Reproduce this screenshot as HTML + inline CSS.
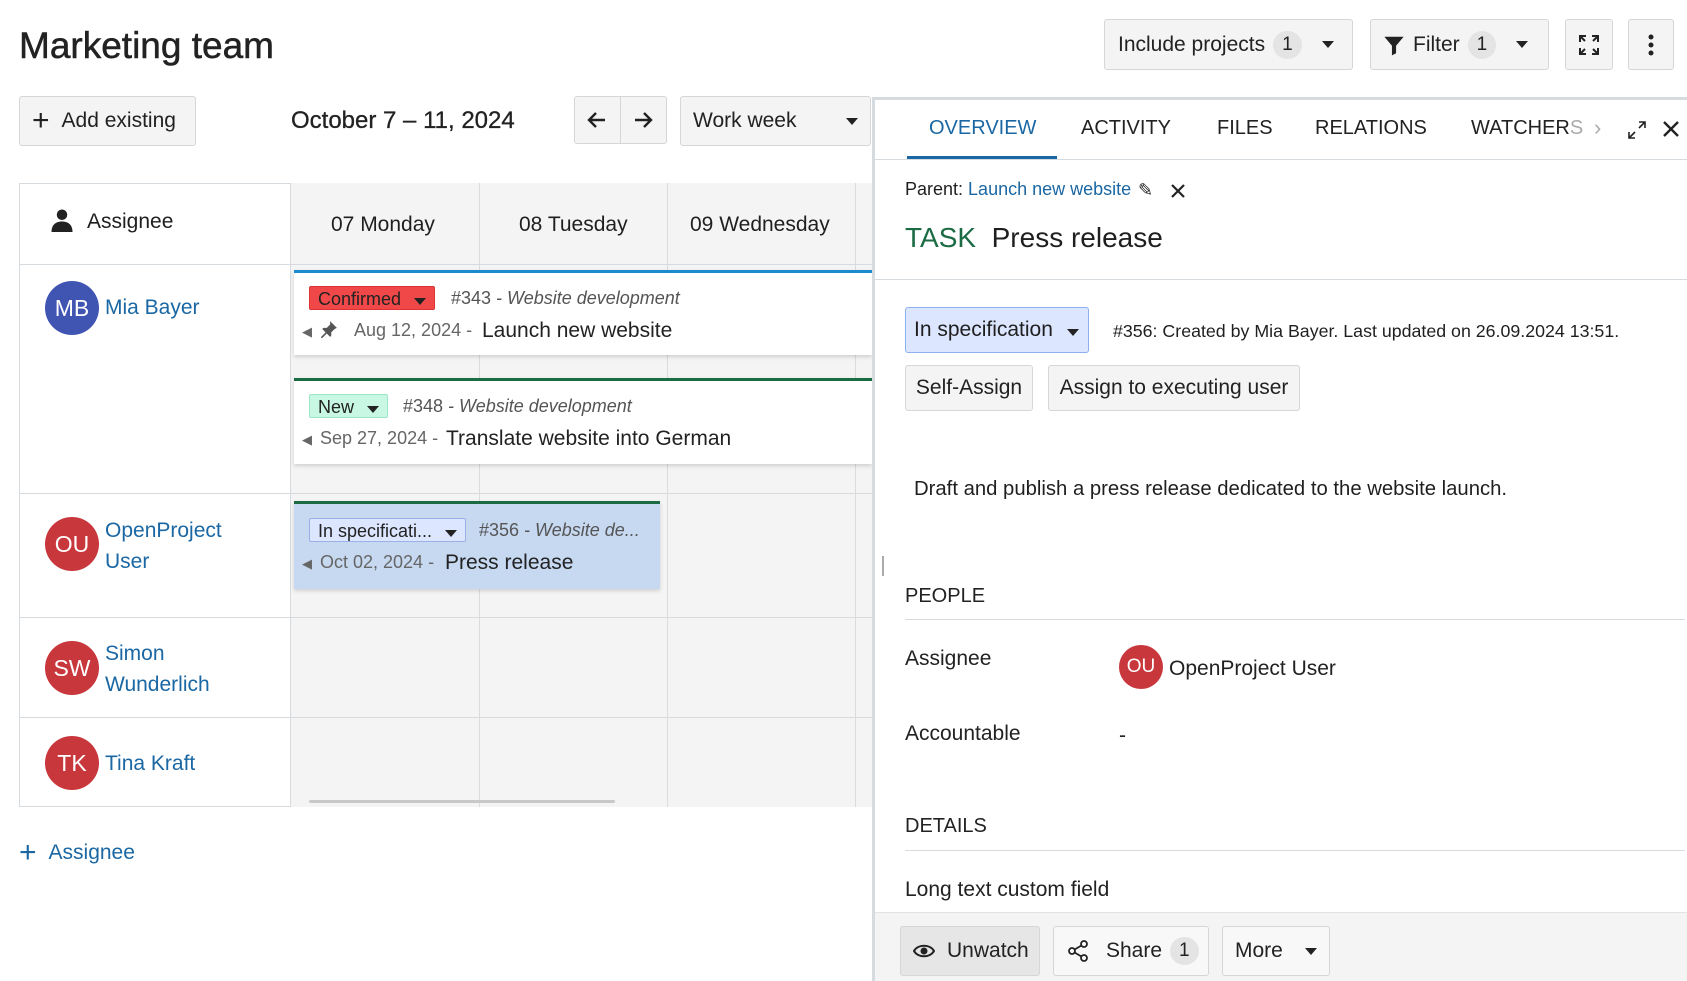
<!DOCTYPE html>
<html><head><meta charset="utf-8"><style>
*{box-sizing:border-box;margin:0;padding:0}
body{width:1687px;height:981px;overflow:hidden;background:#fff;font-family:"Liberation Sans",sans-serif;color:#1f1f1f;position:relative;font-size:20px}
.a{position:absolute;white-space:nowrap}
.btn{position:absolute;border:1px solid #d6d6d6;background:#f4f4f4;border-radius:3px;display:flex;align-items:center;font-size:21px;color:#222}
.cnt{display:inline-block;background:#e4e4e4;border-radius:14px;padding:0 9px;font-size:19px;margin-left:8px;line-height:28px}
.tri{display:inline-block;width:0;height:0;border-left:6px solid transparent;border-right:6px solid transparent;border-top:7px solid #222}
.av{position:absolute;width:54px;height:54px;border-radius:50%;color:#fff;font-size:23px;display:flex;align-items:center;justify-content:center}
.lk{color:#1a67a3}
.card{position:absolute;background:#fff;box-shadow:0 2px 4px rgba(0,0,0,.15)}
.tag{position:absolute;font-size:18px;padding:0 8px;height:24px;line-height:24px;border-radius:2px}
.meta{position:absolute;font-size:18px;color:#555;font-style:italic}
.sub{position:absolute;font-size:18px;color:#666}
.ttl{position:absolute;font-size:21px;color:#222}
.tab{position:absolute;top:117px;font-size:20px;color:#222}
.lbl{position:absolute;font-size:21px;color:#222}
.hd{position:absolute;font-size:20px;color:#222;font-weight:normal}
</style></head><body>
<div class="a" style="left:19px;top:25px;font-size:37px;color:#222;-webkit-text-stroke:0.5px #222">Marketing team</div>

<div class="btn" style="left:1104px;top:19px;width:249px;height:51px;padding-left:13px">Include projects<span class="cnt">1</span><span class="tri" style="margin-left:20px"></span></div>
<div class="btn" style="left:1370px;top:19px;width:179px;height:51px;padding-left:12px"><svg width="22" height="22" viewBox="0 0 16 16"><path d="M1 2h14l-5.5 6.5V14l-3 1.5V8.5z" fill="#222"/></svg><span style="margin-left:8px">Filter</span><span class="cnt">1</span><span class="tri" style="margin-left:20px"></span></div>
<div class="btn" style="left:1565px;top:19px;width:48px;height:51px;justify-content:center"><svg width="24" height="24" viewBox="0 0 24 24" fill="none" stroke="#222" stroke-width="2"><path d="M3 9V3h6M15 3h6v6M21 15v6h-6M9 21H3v-6M3 3l5 5M21 3l-5 5M21 21l-5-5M3 21l5-5"/></svg></div>
<div class="btn" style="left:1628px;top:19px;width:46px;height:51px;justify-content:center"><svg width="6" height="22"><circle cx="3" cy="3" r="2.5" fill="#222"/><circle cx="3" cy="11" r="2.5" fill="#222"/><circle cx="3" cy="19" r="2.5" fill="#222"/></svg></div>

<div class="btn" style="left:19px;top:96px;width:177px;height:50px;padding-left:12px"><span style="font-size:30px;font-weight:300;margin-right:12px;line-height:1">+</span>Add existing</div>
<div class="a" style="left:291px;top:107px;font-size:24px;color:#222;-webkit-text-stroke:0.3px #222">October 7 – 11, 2024</div>
<div class="btn" style="left:574px;top:96px;width:93px;height:48px"><span style="width:46px;text-align:center;border-right:1px solid #d6d6d6;height:100%;display:flex;align-items:center;justify-content:center"><svg width="20" height="18" viewBox="0 0 20 18" fill="none" stroke="#222" stroke-width="2.4"><path d="M18 9H3M9 2L2 9l7 7"/></svg></span><span style="width:46px;display:flex;justify-content:center"><svg width="20" height="18" viewBox="0 0 20 18" fill="none" stroke="#222" stroke-width="2.4"><path d="M2 9h15M11 2l7 7-7 7"/></svg></span></div>
<div class="btn" style="left:680px;top:96px;width:191px;height:50px;padding-left:12px">Work week<span class="tri" style="margin-left:50px"></span></div>

<!-- table -->
<div class="a" style="left:19px;top:183px;width:853px;height:624px;border-top:1px solid #d6dbe0;border-left:1px solid #d6dbe0;border-bottom:1px solid #d6dbe0;background:#fff"></div>
<div class="a" style="left:290px;top:183px;width:582px;height:624px;background:#f4f4f4"></div>
<div class="a" style="left:290px;top:183px;width:1px;height:624px;background:#d6dbe0"></div>
<div class="a" style="left:479px;top:183px;width:1px;height:624px;background:#dcdcdc"></div>
<div class="a" style="left:667px;top:183px;width:1px;height:624px;background:#dcdcdc"></div>
<div class="a" style="left:855px;top:183px;width:1px;height:624px;background:#dcdcdc"></div>
<div class="a" style="left:19px;top:264px;width:853px;height:1px;background:#d6dbe0"></div>
<div class="a" style="left:19px;top:493px;width:853px;height:1px;background:#d6dbe0"></div>
<div class="a" style="left:19px;top:617px;width:853px;height:1px;background:#d6dbe0"></div>
<div class="a" style="left:19px;top:717px;width:853px;height:1px;background:#d6dbe0"></div>
<div class="a" style="left:50px;top:208px"><svg width="24" height="24" viewBox="0 0 16 16"><circle cx="8" cy="4.5" r="3.5" fill="#222"/><path d="M1 16c0-5 3-7 7-7s7 2 7 7z" fill="#222"/></svg></div>
<div class="a" style="left:87px;top:210px;font-size:21px">Assignee</div>
<div class="a" style="left:331px;top:213px;font-size:21px">07 Monday</div>
<div class="a" style="left:519px;top:213px;font-size:21px">08 Tuesday</div>
<div class="a" style="left:690px;top:213px;font-size:21px">09 Wednesday</div>

<div class="av" style="left:45px;top:281px;background:#4054b2">MB</div>
<div class="a lk" style="left:105px;top:296px;font-size:21px">Mia Bayer</div>
<div class="av" style="left:45px;top:517px;background:#c8373c">OU</div>
<div class="a lk" style="left:105px;top:515px;font-size:21px;line-height:31px">OpenProject<br>User</div>
<div class="av" style="left:45px;top:641px;background:#c8373c">SW</div>
<div class="a lk" style="left:105px;top:638px;font-size:21px;line-height:31px">Simon<br>Wunderlich</div>
<div class="av" style="left:45px;top:736px;background:#c8373c">TK</div>
<div class="a lk" style="left:105px;top:752px;font-size:21px">Tina Kraft</div>

<div class="card" style="left:294px;top:270px;width:578px;height:85px;border-top:3px solid #1a8bcf"></div>
<div class="tag" style="left:309px;top:286px;background:#f04848;border:1px solid #d33;color:#222">Confirmed <span class="tri" style="margin-left:8px"></span></div>
<div class="meta" style="left:451px;top:288px"><span style="font-style:normal">#343</span> - Website development</div>
<div class="sub" style="left:302px;top:320px;font-size:13px;top:324px">◀</div>
<div class="a" style="left:320px;top:320px"><svg width="18" height="18" viewBox="0 0 16 16"><path d="M9 1l6 6-2 1-3 3 0 3-1 1-3-3-4 4-1 0 0-1 4-4-3-3 1-1 3 0 3-3z" fill="#555"/></svg></div>
<div class="sub" style="left:354px;top:320px">Aug 12, 2024 -</div>
<div class="ttl" style="left:482px;top:319px">Launch new website</div>

<div class="card" style="left:294px;top:378px;width:578px;height:86px;border-top:3px solid #1b6b44"></div>
<div class="tag" style="left:309px;top:394px;background:#c8f7e3;border:1px solid #9de6c5;color:#222">New <span class="tri" style="margin-left:8px"></span></div>
<div class="meta" style="left:403px;top:396px"><span style="font-style:normal">#348</span> - Website development</div>
<div class="sub" style="left:302px;top:432px;font-size:13px">◀</div>
<div class="sub" style="left:320px;top:428px">Sep 27, 2024 -</div>
<div class="ttl" style="left:446px;top:427px">Translate website into German</div>

<div class="card" style="left:294px;top:501px;width:366px;height:88px;border-top:3px solid #1b6b44;background:#c6d9f1"></div>
<div class="tag" style="left:309px;top:518px;background:#dde6ff;border:1px solid #9ab0e6;color:#222">In specificati... <span class="tri" style="margin-left:8px"></span></div>
<div class="meta" style="left:479px;top:520px"><span style="font-style:normal">#356</span> - Website de...</div>
<div class="sub" style="left:302px;top:556px;font-size:13px">◀</div>
<div class="sub" style="left:320px;top:552px">Oct 02, 2024 -</div>
<div class="ttl" style="left:445px;top:551px">Press release</div>

<div class="a" style="left:309px;top:800px;width:306px;height:3px;background:#c8c8c8;border-radius:2px"></div>
<div class="a lk" style="left:19px;top:836px;font-size:21px"><span style="font-size:30px;font-weight:300;vertical-align:-3px;margin-right:12px">+</span>Assignee</div>

<!-- right panel -->
<div class="a" style="left:872px;top:97px;width:815px;height:884px;border-left:3px solid #d6dbe0;border-top:3px solid #d6dbe0;background:#fff"></div>
<div class="a" style="left:882px;top:556px;width:2px;height:20px;border-left:1px solid #aaa;border-right:1px solid #aaa"></div>
<div class="tab" style="left:929px;color:#1a67a3">OVERVIEW</div>
<div class="a" style="left:907px;top:156px;width:150px;height:4px;background:#1a67a3"></div>
<div class="tab" style="left:1081px">ACTIVITY</div>
<div class="tab" style="left:1217px">FILES</div>
<div class="tab" style="left:1315px">RELATIONS</div>
<div class="tab" style="left:1471px">WATCHER<span style="color:#aaa">S</span></div>
<div class="a" style="left:1594px;top:115px;font-size:22px;color:#aaa">›</div>
<div class="a" style="left:1627px;top:120px"><svg width="20" height="20" viewBox="0 0 20 20" fill="none" stroke="#222" stroke-width="1.6"><path d="M12 2h6v6M18 2l-6 6M8 18H2v-6M2 18l6-6"/></svg></div>
<div class="a" style="left:1661px;top:119px"><svg width="20" height="20" viewBox="0 0 20 20" stroke="#222" stroke-width="2.4"><path d="M3 3l14 14M17 3L3 17"/></svg></div>
<div class="a" style="left:875px;top:159px;width:812px;height:1px;background:#d6dbe0"></div>

<div class="a" style="left:905px;top:179px;font-size:18px">Parent: <span class="lk">Launch new website</span></div>
<div class="a" style="left:1138px;top:180px;font-size:18px">✎</div>
<div class="a" style="left:1170px;top:182px"><svg width="16" height="16" stroke="#222" stroke-width="2.2"><path d="M2 2l12 12M14 2L2 14"/></svg></div>
<div class="a" style="left:905px;top:222px;font-size:28px"><span style="color:#1b6b44">TASK</span>&nbsp; Press release</div>
<div class="a" style="left:875px;top:279px;width:812px;height:1px;background:#d6dbe0"></div>

<div class="a" style="left:905px;top:307px;width:184px;height:46px;background:#dde6ff;border:1px solid #8fb0f0;border-radius:3px;font-size:21px;padding:10px 0 0 8px">In specification <span class="tri" style="margin-left:8px"></span></div>
<div class="a" style="left:1113px;top:321px;font-size:17.8px">#356: Created by Mia Bayer. Last updated on 26.09.2024 13:51.</div>
<div class="btn" style="left:905px;top:365px;width:128px;height:46px;justify-content:center">Self-Assign</div>
<div class="btn" style="left:1048px;top:365px;width:252px;height:46px;justify-content:center">Assign to executing user</div>
<div class="a" style="left:914px;top:478px;font-size:20.3px">Draft and publish a press release dedicated to the website launch.</div>

<div class="hd" style="left:905px;top:585px">PEOPLE</div>
<div class="a" style="left:905px;top:619px;width:780px;height:1px;background:#d6dbe0"></div>
<div class="lbl" style="left:905px;top:647px">Assignee</div>
<div class="av" style="left:1119px;top:645px;width:44px;height:44px;font-size:19px;background:#c8373c">OU</div>
<div class="lbl" style="left:1169px;top:657px">OpenProject User</div>
<div class="lbl" style="left:905px;top:722px">Accountable</div>
<div class="lbl" style="left:1119px;top:724px">-</div>
<div class="hd" style="left:905px;top:815px">DETAILS</div>
<div class="a" style="left:905px;top:850px;width:780px;height:1px;background:#d6dbe0"></div>
<div class="lbl" style="left:905px;top:878px">Long text custom field</div>

<div class="a" style="left:875px;top:912px;width:812px;height:69px;background:#f4f4f4;border-top:1px solid #e2e2e2"></div>
<div class="btn" style="left:900px;top:926px;width:140px;height:50px;padding-left:12px;background:#e6e6e6"><svg width="22" height="16" viewBox="0 0 22 16"><path d="M1 8C5 1 17 1 21 8C17 15 5 15 1 8z" fill="none" stroke="#222" stroke-width="2"/><circle cx="11" cy="8" r="3.5" fill="#222"/></svg><span style="margin-left:12px">Unwatch</span></div>
<div class="btn" style="left:1053px;top:926px;width:156px;height:50px;padding-left:12px;background:#f8f8f8"><svg width="24" height="24" viewBox="0 0 24 24" fill="none" stroke="#222" stroke-width="1.8"><circle cx="18" cy="5" r="3"/><circle cx="6" cy="12" r="3"/><circle cx="18" cy="19" r="3"/><path d="M8.6 10.5l6.8-4M8.6 13.5l6.8 4"/></svg><span style="margin-left:16px">Share</span><span class="cnt">1</span></div>
<div class="btn" style="left:1222px;top:926px;width:108px;height:50px;padding-left:12px;background:#f8f8f8">More<span class="tri" style="margin-left:22px"></span></div>
</body></html>
